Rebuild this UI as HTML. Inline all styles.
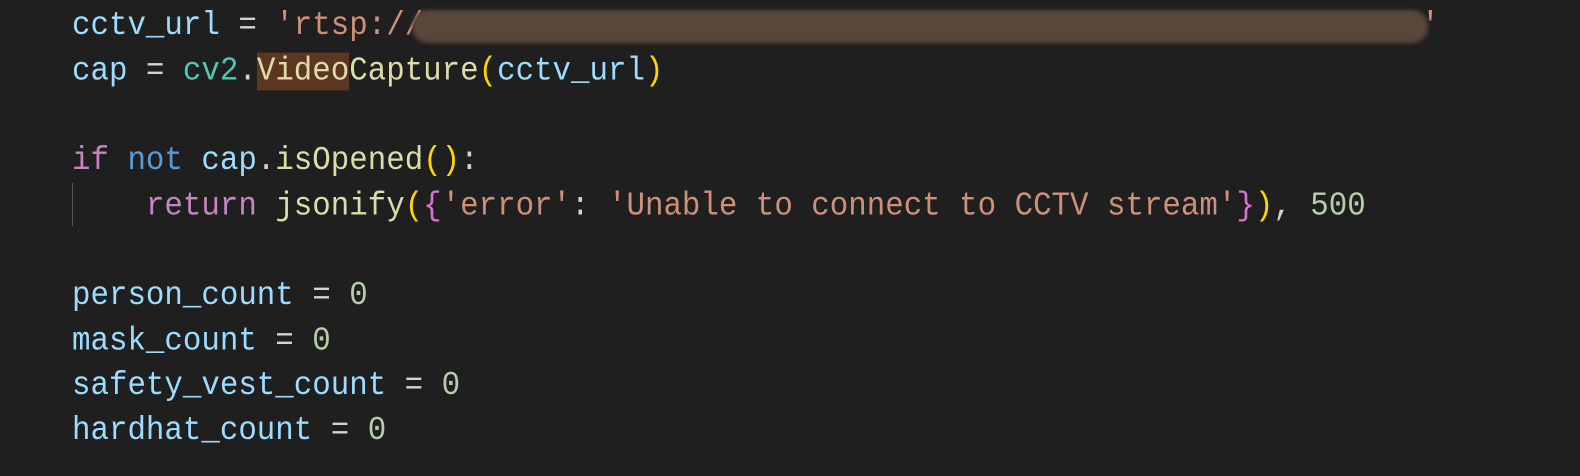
<!DOCTYPE html>
<html><head><style>
html,body{margin:0;padding:0;background:#1f1f1f;width:1580px;height:476px;overflow:hidden}
.c{position:absolute;left:72px;top:4px;font-family:"Liberation Mono",monospace;font-size:30.8px;line-height:41.67px;color:#9cdcfe;white-space:pre;transform:scaleY(1.08);transform-origin:0 0}
.s{color:#ce9178}.o{color:#d4d4d4}.t{color:#4ec9b0}.k{color:#c586c0}.b{color:#569cd6}.f{color:#dcdcaa}.n{color:#b5cea8}.y{color:#ffd700}.p{color:#da70d6}.w{color:#d4d4d4}
.hl{background:#5c3620}
</style></head><body>
<div style="position:absolute;left:72px;top:183px;width:1px;height:43px;background:#555"></div>
<div class="c"><span>cctv_url</span><span class="o"> = </span><span class="s">'rtsp://                                                      '</span>
cap<span class="o"> = </span><span class="t">cv2</span><span class="w">.</span><span class="hl" style="color:#dcdcaa">Video</span><span class="f">Capture</span><span class="y">(</span>cctv_url<span class="y">)</span>

<span class="k">if</span> <span class="b">not</span> cap<span class="w">.</span><span class="f">isOpened</span><span class="y">()</span><span class="w">:</span>
    <span class="k">return</span> <span class="f">jsonify</span><span class="y">(</span><span class="p">{</span><span class="s">'error'</span><span class="w">: </span><span class="s">'Unable to connect to CCTV stream'</span><span class="p">}</span><span class="y">)</span><span class="w">, </span><span class="n">500</span>

person_count<span class="o"> = </span><span class="n">0</span>
mask_count<span class="o"> = </span><span class="n">0</span>
safety_vest_count<span class="o"> = </span><span class="n">0</span>
hardhat_count<span class="o"> = </span><span class="n">0</span></div>
<div style="position:absolute;left:412px;top:10px;width:1016px;height:33px;border-radius:16px;background:#5a463b;filter:blur(2px)"></div>
</body></html>
